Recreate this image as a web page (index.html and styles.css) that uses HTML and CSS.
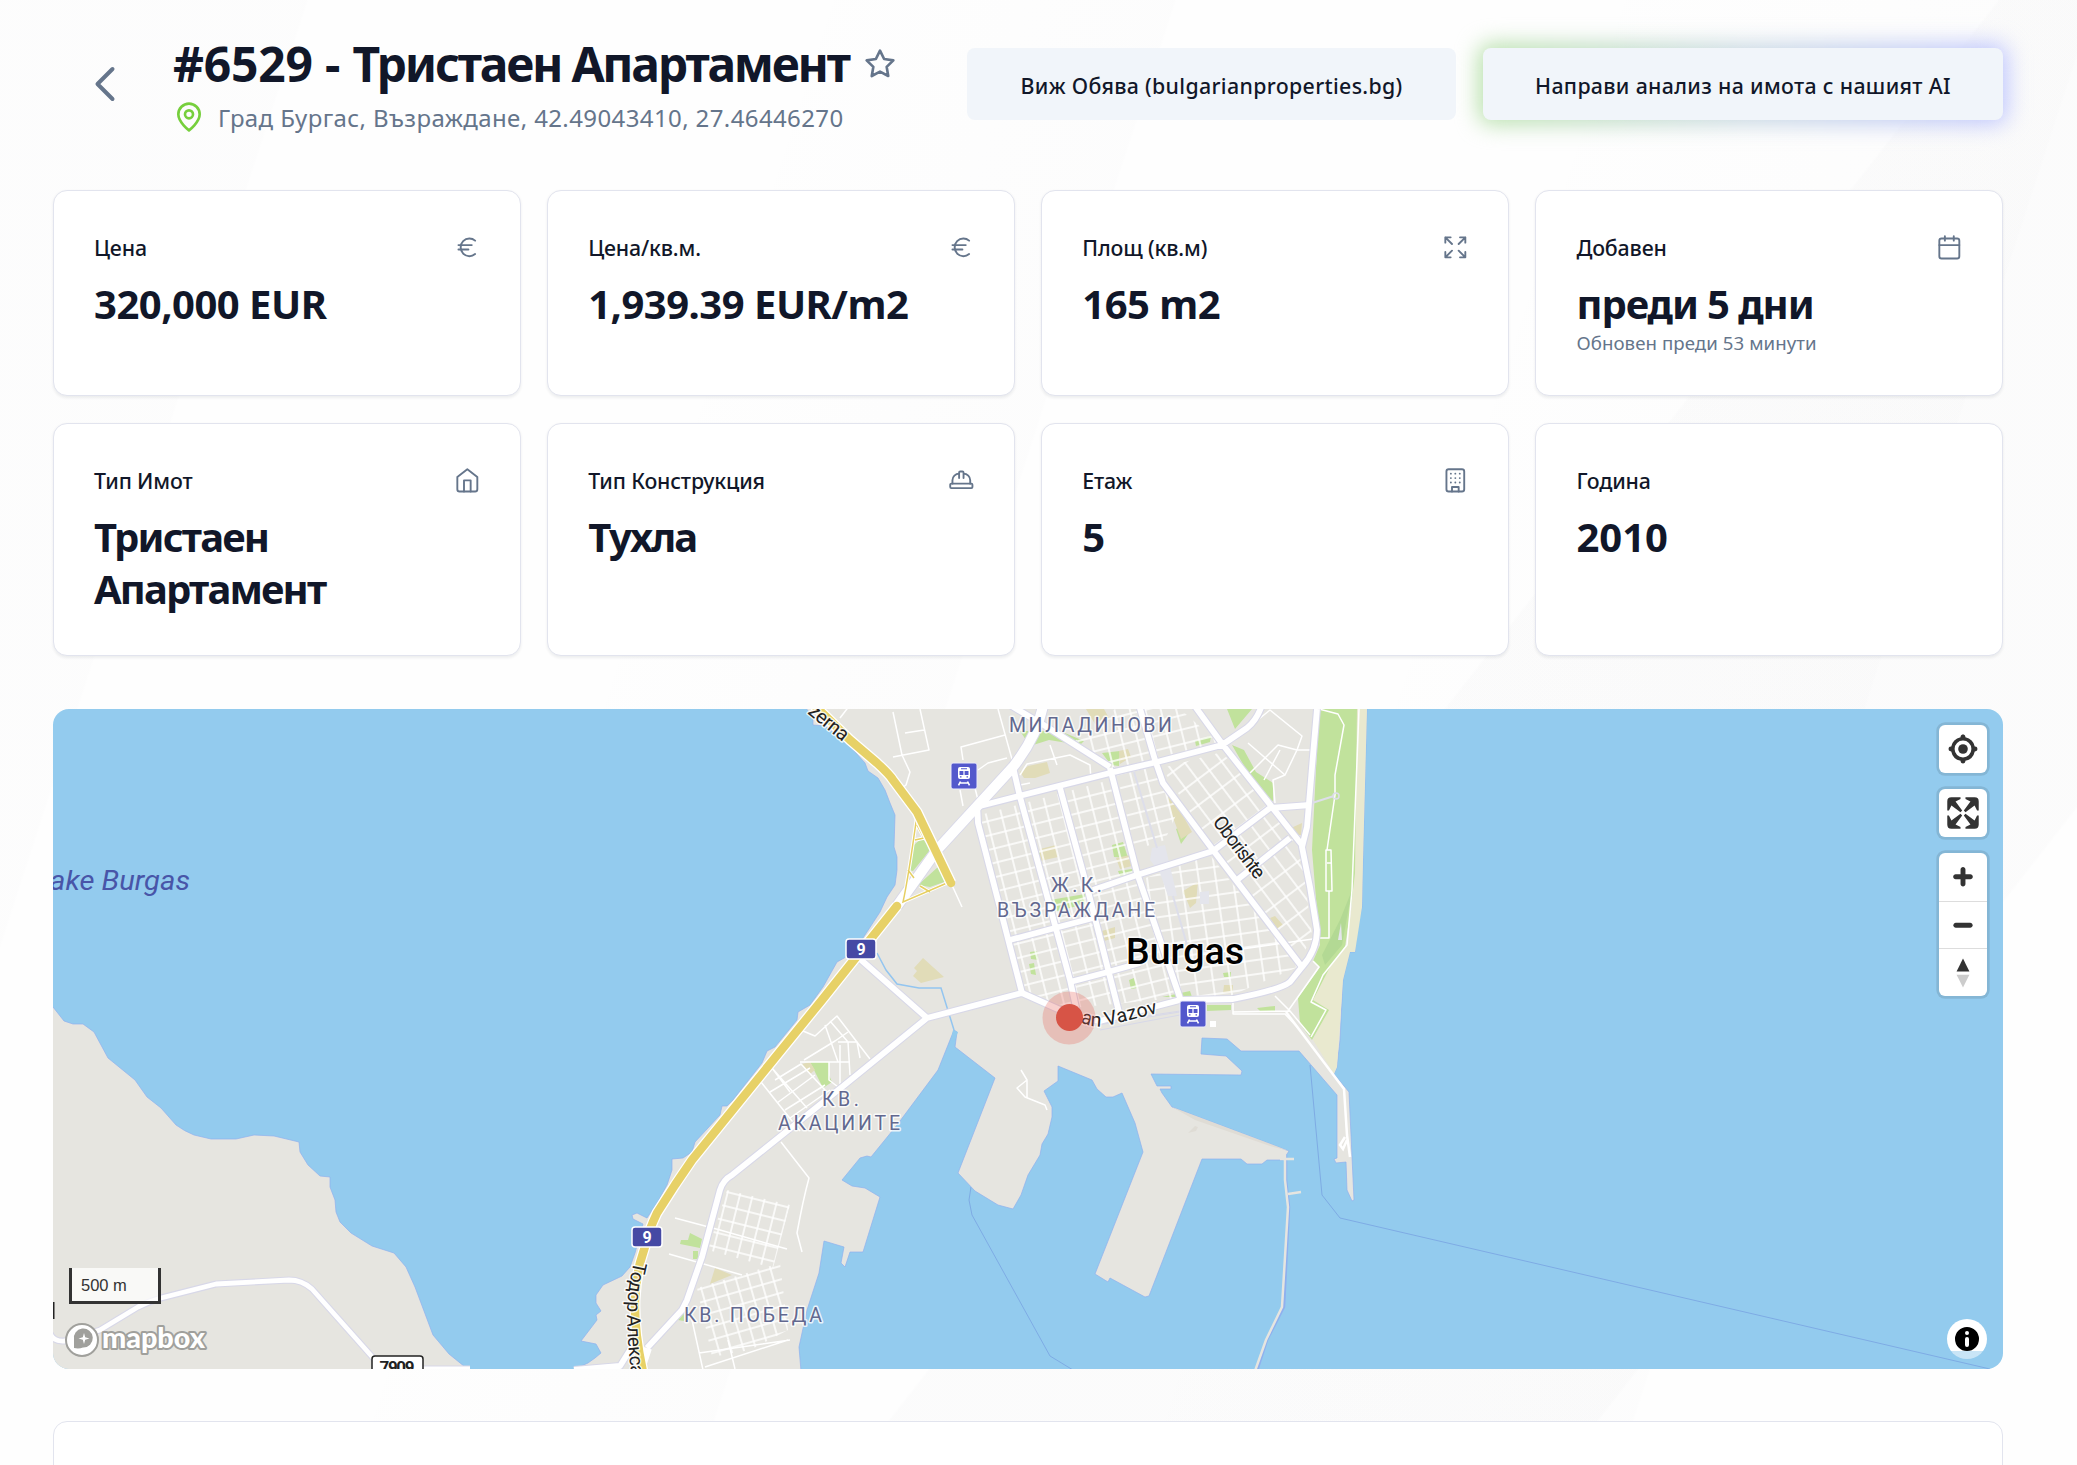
FILE: index.html
```html
<!DOCTYPE html>
<html lang="bg">
<head>
<meta charset="utf-8">
<title>#6529 - Тристаен Апартамент</title>
<link rel="stylesheet" href="styles.css">
</head>
<body>
<main class="page">
  <header class="header">
    <svg class="back" viewBox="0 0 24 24"><path d="m15 18-6-6 6-6"/></svg>
    <div class="heading">
      <div class="title-row">
        <h1 class="title"><span class="title-id">#6529 - </span>Тристаен Апартамент</h1>
        <svg class="star" viewBox="0 0 24 24"><path d="M12 2l3.09 6.26L22 9.27l-5 4.87 1.18 6.88L12 17.77l-6.18 3.25L7 14.14 2 9.27l6.91-1.01z"/></svg>
      </div>
      <div class="address">
        <svg class="pin" viewBox="0 0 24 24"><path d="M20 10c0 6-8 12-8 12s-8-6-8-12a8 8 0 0 1 16 0z"/><circle cx="12" cy="10" r="3"/></svg>
        <span class="address-text">Град Бургас, Възраждане, 42.49043410, 27.46446270</span>
      </div>
    </div>
    <div class="actions">
      <a class="btn btn-view"><span>Виж Обява (bulgarianproperties.bg)</span></a>
      <a class="btn btn-ai"><span>Направи анализ на имота с нашият AI</span></a>
    </div>
  </header>

  <section class="cards">
    <article class="card">
      <div class="card-head"><span>Цена</span><svg class="icon" viewBox="0 0 24 24"><path d="M4 10h12M4 14h9M19 6a7.7 7.7 0 0 0-5.2-2A7.9 7.9 0 0 0 6 12c0 4.4 3.5 8 7.8 8 2 0 3.8-.8 5.2-2"/></svg></div>
      <div class="value">320,000 EUR</div>
    </article>
    <article class="card">
      <div class="card-head"><span>Цена/кв.м.</span><svg class="icon" viewBox="0 0 24 24"><path d="M4 10h12M4 14h9M19 6a7.7 7.7 0 0 0-5.2-2A7.9 7.9 0 0 0 6 12c0 4.4 3.5 8 7.8 8 2 0 3.8-.8 5.2-2"/></svg></div>
      <div class="value">1,939.39 EUR/m2</div>
    </article>
    <article class="card">
      <div class="card-head"><span>Площ (кв.м)</span><svg class="icon" viewBox="0 0 24 24"><path d="m21 21-6-6m6 6v-4.8m0 4.8h-4.8M3 16.2V21m0 0h4.8M3 21l6-6M21 7.8V3m0 0h-4.8M21 3l-6 6M3 7.8V3m0 0h4.8M3 3l6 6"/></svg></div>
      <div class="value">165 m2</div>
    </article>
    <article class="card">
      <div class="card-head"><span>Добавен</span><svg class="icon" viewBox="0 0 24 24"><rect x="3" y="4" width="18" height="18" rx="2"/><path d="M16 2v4M8 2v4M3 10h18"/></svg></div>
      <div class="value value-phrase">преди 5 дни</div>
      <div class="note">Обновен преди 53 минути</div>
    </article>
    <article class="card">
      <div class="card-head"><span>Тип Имот</span><svg class="icon" viewBox="0 0 24 24"><path d="m3 9 9-7 9 7v11a2 2 0 0 1-2 2H5a2 2 0 0 1-2-2z"/><path d="M9 22V12h6v10"/></svg></div>
      <div class="value value-word">Тристаен Апартамент</div>
    </article>
    <article class="card">
      <div class="card-head"><span>Тип Конструкция</span><svg class="icon" viewBox="0 0 24 24"><path d="M2 18a1 1 0 0 0 1 1h18a1 1 0 0 0 1-1v-2a1 1 0 0 0-1-1H3a1 1 0 0 0-1 1z"/><path d="M10 10V5a1 1 0 0 1 1-1h2a1 1 0 0 1 1 1v5M4 15v-3a6 6 0 0 1 6-6M14 6a6 6 0 0 1 6 6v3"/></svg></div>
      <div class="value value-word">Тухла</div>
    </article>
    <article class="card">
      <div class="card-head"><span>Етаж</span><svg class="icon" viewBox="0 0 24 24"><rect x="4" y="2" width="16" height="20" rx="2"/><path d="M9 22v-4h6v4M8 6h.01M16 6h.01M12 6h.01M12 10h.01M12 14h.01M16 10h.01M16 14h.01M8 10h.01M8 14h.01"/></svg></div>
      <div class="value">5</div>
    </article>
    <article class="card">
      <div class="card-head"><span>Година</span></div>
      <div class="value value-year">2010</div>
    </article>
  </section>

  <section class="map">
    <svg class="map-canvas" viewBox="53 709 1950 660">
      <defs>
        <pattern id="blocks" width="15" height="14" patternUnits="userSpaceOnUse" patternTransform="translate(983 807) rotate(-14)"><path d="M0 1H15M1 0V14" class="street"/></pattern>
        <pattern id="blocksEast" width="21" height="15" patternUnits="userSpaceOnUse" patternTransform="translate(1237 880) rotate(53)"><path d="M0 1H21M1 0V15" class="street"/></pattern>
        <pattern id="blocksCenter" width="17" height="14" patternUnits="userSpaceOnUse" patternTransform="translate(1180 998) rotate(-8)"><path d="M0 1H17M1 0V14" class="street"/></pattern>
        <pattern id="blocksSouth" width="12.5" height="14" patternUnits="userSpaceOnUse" patternTransform="translate(727 1191) rotate(14)"><path d="M0 1H12.5M1 0V14" class="street"/></pattern>
        <pattern id="blocksPobeda" width="12" height="13" patternUnits="userSpaceOnUse" patternTransform="translate(700 1288) rotate(-16)"><path d="M0 1H12M1 0V13" class="street"/></pattern>
        <g id="roads">
          <path d="M860 959 927 1018M647 1348 682 1310 687 1300 702 1257 720 1190Q723 1180 732 1175L842 1087 927 1018 1022 993 1078 1018 1100 1021 1180 1000 1233 999Q1280 990 1290 982L1302 967Q1317 950 1317 930L1310 887 1302 847 1307 827 1312 767 1317 709"/>
          <path d="M980 806 1110 773 1157 762 1222 745 1247 728Q1257 720 1262 705M977 803 978 823 1022 993M1013 767 1020 797 1070 980 1077 1012M1060 788 1087 887 1120 1016M1110 768 1137 873 1180 998M1010 705 1047 727 1110 767M1139 705 1155 760 1163 783 1213 850 1302 967M1194 705 1223 745 1302 845M1093 890 1137 875 1213 851 1270 808 1310 805M1237 880 1290 838M1010 940 1055 928 1093 918M1070 982 1108 972 1140 963"/>
          <path d="M574 1370 620 1366 630 1350 636 1340"/>
        </g>
        <path id="rural" d="M50 1333Q53 1342 65 1341L100 1330 138 1307Q150 1301 161 1298L216 1284 289 1280Q302 1280 312 1289L375 1360 395 1370M420 1369 470 1369"/>
        <path id="trunk" d="M812 703 850 740 877 763Q890 775 893 780L917 812 951 883M897 906 822 1000 692 1160 675 1185 657 1213Q649 1230 647 1240L640 1263Q636 1280 635 1300Q634 1330 643 1372"/>
        <path id="todorLine" d="M634 1261 Q627 1290 627 1315 T633 1390"/>
        <path id="vazovLine" d="M1080 1022Q1094 1029 1110 1025L1162 1012"/>
        <g id="station"><rect x="-13" y="-13" width="26" height="26" rx="2" class="station-box"/><path fill="#fff" fill-rule="evenodd" d="M-4-9H4Q6-9 6-7V1Q6 3 4 3H-4Q-6 3-6 1V-7Q-6-9-4-9zM-3-7.800V-6.800H3V-7.800zM-4.500-5V-1H-.6V-5zM.6-5V-1H4.500V-5zM-4 .3V1.600H-2.500V.3zM2.500 .3V1.600H4V.3z"/><path d="M-5.500 9.300-3.500 5.500M3.500 5.500 5.500 9.300M-4.500 7H4.500" class="rail"/></g>
      </defs>

      <rect x="53" y="709" width="1950" height="660" fill="#93cbee"/>
      <g class="waterway">
        <path d="M971 1187 969 1200 972 1215 1050 1356 1073 1370M1310 1065 1322 1195 1340 1218 1990 1369"/>
      </g>
      <path class="land" d="M53 1007 64 1021 73 1024 83 1024 94 1032 108 1058 135 1080 147 1097 161 1108 176 1125Q184 1131 194 1135L211 1139H236L254 1135 274 1136 299 1142 300 1152 308 1165 320 1176 330 1177V1187L335 1200 336 1212 340 1222 351 1233 372 1246 394 1253 406 1267 415 1287 433 1335 449 1354 470 1371H51V1005z"/>
      <path class="land" d="M805 707 813 717V725L825 726 847 743 865 763 868 771 878 778 885 790 890 803 895 815 894 847 897 857V870L895 885 887 897 880 912 863 938 846 957 837 962 823 987 810 1005 798 1012 797 1020 775 1047 767 1051 762 1063 733 1100 727 1106H722L720 1115 695 1142 692 1152 683 1158 672 1159V1170L667 1185 657 1203 647 1218 637 1213 632 1215 633 1219 643 1224 635 1253 630 1267 622 1276 603 1285 596 1295V1303L601 1311 596 1315 597 1320 581 1341 596 1344 601 1353 595 1358 588 1363 570 1371H801L799 1347 807 1310 819 1273 824 1241 844 1247 841 1263 845 1267 850 1252H863L880 1197 865 1188 852 1186 842 1180 860 1158 867 1156 871 1157 897 1125 938 1070 954 1030 957 1032 955 1047 995 1078 958 1173 975 1191 998 1205 1013 1209 1021 1195 1028 1175 1040 1155 1042 1144 1048 1134 1052 1117V1107L1044 1091 1058 1081V1066L1092 1080 1097 1089 1106 1097H1113L1122 1093 1135 1123 1143 1152 1095 1274 1108 1282 1110 1278 1145 1297 1149 1296 1202 1159H1241L1247 1164H1262L1267 1160H1283L1289 1151 1172 1107 1162 1093 1160 1089H1171V1086H1157L1151 1074 1241 1075 1242 1071 1226 1056 1201 1054 1202 1038 1227 1039 1241 1051H1299L1337 1095V1158L1334 1159 1336 1163 1346 1162 1347 1190 1352 1201 1354 1200 1349 1092 1334 1074 1337 1067 1340 1040 1343 980 1346 967 1350 952H1355L1357 927 1362 907 1363 860 1367 707z"/>
      <g fill="none"><path d="M1286 1155V1180L1289 1207 1284 1307 1267 1340 1257 1371" stroke="#8fb0ee" stroke-width="2.500"/><path d="M1285 1155V1180L1288 1207 1282 1307 1266 1340 1255 1371M1288 1194 1301 1192M1280 1159H1294" stroke="#e6e5e0" stroke-width="2.500"/></g>
      <path fill="#dfdcd5" d="M1172 1107 1289 1151 1270 1146 1195 1120zM1188 1133 1195 1126 1198 1127 1196 1131z"/>
      <path fill="#e9e9cf" d="M1357 709H1367L1363 860 1362 907 1355 952H1350L1343 980 1337 1067 1334 1074 1313 1040 1327 1010 1311 1002 1323 975 1346 947 1352 905z"/>
      <path class="park" d="M1319 709H1357L1355 873 1351 907 1345 947 1330 967 1313 1000 1329 1010 1312 1040 1300 1024 1298 998 1320 967 1313 961 1320 945 1318 923 1312 850z"/>
      <path fill="#b3d994" d="M1352 890 1342 945 1325 965 1322 955 1340 920z"/>
      <g class="park">
        <path d="M1227 709H1252L1235 729zM1232 745 1244 750 1256 772 1273 783V801L1262 797zM1112 845 1123 842 1128 858 1114 857zM1118 871 1132 869 1134 872 1120 876zM1102 753 1120 751 1119 766 1111 765zM1176 829 1185 825 1189 833 1181 844zM922 838 931 849 913 871 909 870 914 845zM938 867 947 881 930 887 918 885zM908 880 915 880 910 890zM1050 900 1085 894V904L1054 912zM1020 731 1060 731 1084 741 1080 745 1049 740 1030 746zM1195 741 1211 736 1210 742 1196 746zM1162 997 1190 991 1192 997zM1207 1005H1231V1010L1207 1011zM1223 973 1231 972V977H1224zM1129 980 1134 978 1137 988 1131 989zM1030 952 1037 951 1038 960 1031 959zM1029 964 1034 963 1036 975 1031 974zM1183 893 1195 886 1196 890 1186 896zM1257 1008 1275 1006V1011H1260zM1040 850 1044 860 1038 858z"/>
        <path d="M810 1062H829V1075L832 1082 823 1088zM690 1233 702 1239 700 1248 680 1244 681 1240 688 1240zM693 1251H698V1259H693zM684 1313V1321L678 1320z"/>
      </g>
      <g fill="#e1dcb8">
        <path d="M923 958 944 977 921 983 913 976 917 971 914 968zM1020 772 1028 766 1047 762 1050 773 1035 778 1024 778zM1040 849 1056 845 1058 857 1040 861zM1119 751 1128 749 1131 757 1120 764zM1116 858 1130 855 1132 866 1120 869zM1167 793 1180 810 1192 832 1181 839 1172 815zM1183 891 1198 882 1196 903 1190 908zM1291 828 1302 823 1301 835 1295 835zM1102 931 1115 927V938L1104 941zM1224 985H1233V993H1223zM1270 918 1275 916 1283 925 1277 929zM1086 709H1104L1110 720 1095 724zM802 1064 810 1062 815 1070 810 1074zM715 1268 732 1275 710 1284z"/>
      </g>
      <path fill="none" stroke="#93c5f0" stroke-width="1.500" d="M877 953 886 970 897 984 919 988H941L954 1030"/>
      <path fill="#93cbee" d="M953 1030 958 1032 954 1042 951 1040z"/>

      <path fill="url(#blocks)" d="M980 815 1110 780 1137 873 1177 998 1072 1008 1022 993z"/>
      <path fill="url(#blocks)" d="M1070 745 1115 709H1180L1220 744 1112 769z"/>
      <path fill="url(#blocks)" d="M1117 775 1155 766 1180 806 1165 840 1135 850z"/>
      <path fill="url(#blocksEast)" d="M1162 768 1222 752 1268 807 1213 848z M1216 853 1270 812 1300 846 1312 935 1300 962z"/>
      <path fill="url(#blocksCenter)" d="M1140 880 1210 855 1298 967 1230 996 1182 996z"/>
      <path fill="url(#blocksSouth)" d="M727 1190 790 1205 773 1268 708 1250z"/>
      <path fill="url(#blocksPobeda)" d="M697 1288 780 1263 788 1330 750 1350 712 1357z"/>
      <g class="street">
        <path d="M803 1031 815 1036 837 1016 870 1059M804 1060 835 1041 848 1032M825 1025 838 1062M830 1021 848 1042 850 1075M857 1042 860 1058M838 1042H857M800 1062H850M829 1062V1080L842 1090M840 1045V1085M772 1068 807 1108M761 1082 800 1131M772 1068 790 1092M775 1080 801 1064 825 1090M770 1092 810 1068M777 1103 815 1075M785 1110 825 1085M790 1118 830 1090M781 1142 809 1178Q803 1200 797 1233L802 1252M675 1218 720 1230 787 1249M669 1254 742 1275M692 1320 703 1370M699 1353 790 1340M705 1367 788 1340M728 1340 735 1369"/>
        <path d="M893 712 902 755M920 709 929 750 893 757M905 733 924 730M902 755 910 772 906 785 902 788M963 760 961 747 1005 735M978 770 988 763 1007 758M840 718 850 705M998 709 1015 770M960 790 963 806M975 788 978 800M951 883 962 907M1020 775 1027 764 1070 755 1090 765 1091 780M1050 745 1057 765M1020 785 1030 783M1233 740 1270 710 1302 736 1297 750 1278 745 1250 773M1248 743 1285 775 1297 750H1312M1264 780 1280 750M1285 775 1273 780 1275 803M1319 709 1338 714 1344 725 1335 775V795L1327 850M1326 850H1331L1332 891H1326zM1327 863H1331M1329 891V938H1315M1359 709 1352 890 1347 945 1323 975 1311 1002 1326 1010 1311 1037M1233 996V1014H1285L1298 1028M1233 1012 1290 1011M1313 961 1319 967 1288 1011M1200 955 1320 938M1275 996 1290 1011 1310 1035"/>
        <path d="M1021 1070 1027 1080 1017 1088 1025 1097 1045 1105 1047 1110M1027 1080V1098"/>
      </g>
      <path fill="none" stroke="#fff" stroke-width="2.500" d="M1286 1012 1344 1089 1347 1135 1350 1157M1345 1137 1340 1145 1343 1149 1347 1140"/>
      <g fill="#e4e5ec"><path d="M1152 848 1165 845 1168 858 1171 870 1177 896H1168L1160 873 1150 860zM1200 892 1209 891V904H1200z"/><path fill="none" stroke="#dddeea" stroke-width="2" d="M1134 772 1157 848M1173 896 1187 945M1312 803 1334 796"/><circle cx="1336" cy="796" r="3" fill="none" stroke="#dddeea" stroke-width="1.500"/><path d="M1341 923 1338 940H1342z"/></g>
      <path fill="none" stroke="#d7d8e8" d="M1085 1027 1180 1012M1100 1030 1180 1015M1120 1020 1200 1008"/>
      <rect x="1210" y="1021" width="6" height="6" fill="#fff"/>

      <use href="#rural" class="casing rural-casing"/><use href="#rural" class="fill-road rural-fill"/>
      <use href="#roads" class="casing"/><path class="casing wide" d="M897 906 937 850 1013 767Q1038 735 1043 705"/>
      <use href="#roads" class="fill-road"/>
      <path class="fill-road wide-fill" d="M897 906 937 850 1013 767Q1038 735 1043 705M647 1348 642 1363"/>
      <g fill="none"><path d="M917 815Q908 880 903 902L947 883M917 825 924 838 915 840M908 870 914 878M920 886 930 892" stroke="#fff" stroke-width="3.500"/><path d="M917 815Q908 880 903 902L947 883M917 825 924 838 915 840M908 870 914 878M920 886 930 892" stroke="#e6cf62" stroke-width="1.500"/></g>
      <use href="#trunk" class="trunk-casing"/><use href="#trunk" class="trunk"/>

      <use href="#station" x="964" y="776"/><use href="#station" x="1193" y="1014"/>
      <g class="shield"><rect x="846" y="939" width="30" height="20" rx="3"/><text x="861" y="955">9</text><rect x="632" y="1227" width="30" height="20" rx="3"/><text x="647" y="1243">9</text></g>
      <g class="shield-white"><rect x="372" y="1356" width="51" height="26" rx="3"/><text x="397" y="1373" textLength="35">7909</text></g>
      <path d="M53.500 1302V1319" stroke="#222" stroke-width="2"/>

      <g class="area">
        <text x="1009" y="732" textLength="163">МИЛАДИНОВИ</text>
        <text x="1051" y="892" textLength="51">Ж.К.</text>
        <text x="997" y="917" textLength="158">ВЪЗРАЖДАНЕ</text>
        <text x="822" y="1106" textLength="37">КВ.</text>
        <text x="778" y="1130" textLength="122">АКАЦИИТЕ</text>
        <text x="684" y="1322" textLength="138">КВ. ПОБЕДА</text>
      </g>
      <text class="water-name" x="50" y="890" textLength="140" lengthAdjust="spacingAndGlyphs">ake Burgas</text>
      <g class="road-name">
        <text transform="translate(1212 822) rotate(53)" textLength="73">Oborishte</text>
        <text transform="translate(807 713) rotate(39)" textLength="46">zerna</text>
        <text class="vazov"><textPath href="#vazovLine">an Vazov</textPath></text>
        <text class="todor"><textPath href="#todorLine">Тодор Алекса</textPath></text>
      </g>
      <text class="city" x="1126" y="964" textLength="118" lengthAdjust="spacingAndGlyphs">Burgas</text>
      <circle cx="1069" cy="1018" r="26.500" fill="#e8685c" fill-opacity=".3"/><circle cx="1069.500" cy="1017.500" r="13.500" fill="#d75446"/>

      <g class="brand"><circle cx="82" cy="1340" r="16"/><path fill="#a0a09c" d="M74 1348V1340A9.500 9.500 0 1 1 83 1347.500Q79 1349 74 1348zM84 1333 82.800 1337.300 78.500 1338.500 82.800 1339.700 84 1344 85.200 1339.700 89.500 1338.500 85.200 1337.300z" fill-rule="evenodd"/><text x="102" y="1348" textLength="103" lengthAdjust="spacingAndGlyphs">mapbox</text></g>
    </svg>

    <div class="map-controls">
      <div class="control-group"><svg viewBox="0 0 29 29"><g transform="translate(4.500 4.500)"><path d="M10 4C9 4 9 5 9 5v.1A5 5 0 0 0 5.100 9H5s-1 0-1 1 1 1 1 1h.1A5 5 0 0 0 9 14.900v.1s0 1 1 1 1-1 1-1v-.1a5 5 0 0 0 3.900-3.900h.1s1 0 1-1-1-1-1-1h-.1A5 5 0 0 0 11 5.100V5s0-1-1-1zm0 2.500a3.500 3.500 0 1 1 0 7 3.500 3.500 0 1 1 0-7z" transform="translate(-4.500 -4.500) scale(1.450)"/><circle cx="10" cy="10" r="2.900"/></g></svg></div>
      <div class="control-group"><svg viewBox="0 0 29 29"><path d="M24 16v5.500c0 1.750-.75 2.500-2.500 2.500H16v-1l3-1.500-4-5.500 1-1 5.500 4 1.500-3h1zM6 16l1.500 3 5.500-4 1 1-4 5.500 3 1.500v1H7.500C5.750 24 5 23.250 5 21.500V16h1zm7-11v1l-3 1.500 4 5.500-1 1-5.500-4L6 13H5V7.500C5 5.750 5.750 5 7.500 5H13zm11 2.500c0-1.750-.75-2.500-2.500-2.500H16v1l3 1.500-4 5.500 1 1 5.500-4 1.500 3h1V7.500z"/></svg></div>
      <div class="control-group">
        <svg viewBox="0 0 29 29"><path d="M14.500 8.500c-.75 0-1.500.75-1.500 1.500v3h-3c-.75 0-1.500.75-1.500 1.500S9.250 16 10 16h3v3c0 .75.75 1.500 1.500 1.500S16 19.750 16 19v-3h3c.75 0 1.500-.75 1.500-1.500S19.750 13 19 13h-3v-3c0-.75-.75-1.500-1.500-1.500z"/></svg>
        <svg viewBox="0 0 29 29"><path d="M10 13c-.75 0-1.500.75-1.500 1.500S9.250 16 10 16h9c.75 0 1.500-.75 1.500-1.500S19.750 13 19 13h-9z"/></svg>
        <svg viewBox="0 0 29 29"><path d="m10.500 14 4-8 4 8h-8z"/><path fill="#ccc" d="m10.500 16 4 8 4-8h-8z"/></svg>
      </div>
    </div>
    <div class="scale">500 m</div>
    <div class="info"><svg viewBox="0 0 20 20"><path fill-rule="evenodd" d="M4 10a6 6 0 1 0 12 0 6 6 0 1 0-12 0m5-3a1 1 0 1 0 2 0 1 1 0 1 0-2 0m0 3a1 1 0 1 1 2 0v3a1 1 0 1 1-2 0"/></svg></div>
  </section>

  <section class="panel"></section>
</main>
</body>
</html>
```
FILE: styles.css
```css
* { box-sizing: border-box; }
html { overflow: hidden; }
body {
  margin: 0;
  height: 1465px;
  overflow: hidden;
  font-family: "Noto Sans", "Open Sans", sans-serif;
  color: #111729;
  background:
    linear-gradient(108deg, rgba(120,120,130,.012) 0 12%, transparent 12.1% 30%, rgba(120,120,130,.012) 46%, transparent 46.1% 60%, rgba(120,120,130,.01) 82%, transparent 82.1%),
    linear-gradient(128deg, transparent 0 62%, rgba(120,120,130,.018) 62.1% 84%, transparent 84.1%),
    #fefefe;
}
.page { padding: 34px 74px 0 53px; display: flex; flex-direction: column; }

.header { display: flex; height: 156px; align-items: flex-start; }
.back { width: 60px; height: 60px; margin: 20px 38px 0 22px; fill: none; stroke: #65758b; stroke-width: 1.6; stroke-linecap: round; stroke-linejoin: round; }
.heading { display: flex; flex-direction: column; width: 794px; }
.title-row { display: flex; align-items: center; height: 60px; gap: 15px; }
.title { margin: -1px 0 0; font-size: 48px; line-height: 60px; font-weight: 700; letter-spacing: -2.25px; white-space: nowrap; }
.title-id { letter-spacing: -.2px; }
.star { width: 32px; height: 32px; fill: none; stroke: #65758b; stroke-width: 2; stroke-linejoin: round; }
.address { display: flex; align-items: center; height: 48px; gap: 13px; }
.pin { width: 32px; height: 32px; margin-top: -2px; fill: none; stroke: #76cf3c; stroke-width: 2; stroke-linejoin: round; }
.address-text { font-size: 24px; line-height: 36px; letter-spacing: .39px; color: #65758b; white-space: nowrap; }
.actions { display: flex; gap: 27px; margin-top: 14px; }
.btn { display: flex; align-items: center; justify-content: center; height: 72px; border-radius: 8px; background: #f1f5fa; font-size: 21.333px; font-weight: 500; letter-spacing: .33px; white-space: nowrap; padding-top: 3px; }
.btn-view { width: 489px; }
.btn-ai { position: relative; width: 520px; }
.btn-ai::before { content: ""; position: absolute; inset: -4px -4px; z-index: -1; border-radius: 12px; background: linear-gradient(90deg, #b5e0a6, #c5d6e0 50%, #bdc4ff); filter: blur(11px); }

.cards { display: grid; grid-template-columns: repeat(4, 1fr); grid-template-rows: 206px 233px; gap: 27px 26.67px; }
.card { border: 1.333px solid #e2e4ee; border-radius: 14px; background: #fff; padding: 38px 39px 38px 40px; box-shadow: 0 1.5px 3px rgba(15, 23, 42, .07); }
.card-head { display: flex; align-items: center; justify-content: space-between; height: 36px; font-size: 21.333px; font-weight: 500; letter-spacing: -.15px; }
.icon { width: 26.667px; height: 26.667px; fill: none; stroke: #65758b; stroke-width: 1.7; stroke-linecap: round; stroke-linejoin: round; }
.value { margin-top: 13px; font-size: 40px; line-height: 52px; font-weight: 700; letter-spacing: -.5px; }
.value-phrase { letter-spacing: -1.1px; }
.value-word { letter-spacing: -1.85px; }
.value-year { letter-spacing: 0; }
.note { margin-top: 1px; font-size: 18.667px; line-height: 24px; letter-spacing: .06px; color: #65758b; }

.map { position: relative; margin-top: 53px; height: 660px; border-radius: 16px; overflow: hidden; }
.map-canvas { display: block; width: 1950px; height: 660px; font-family: Roboto, sans-serif; }
.land { fill: #e6e5e0; stroke: #8fb0ee; stroke-width: .7; }
.park { fill: #c1e29c; }
.waterway { fill: none; stroke: #7eabe4; stroke-width: 1; }
.street { fill: none; stroke: #fff; stroke-width: 1.5; stroke-linejoin: round; }
.casing { fill: none; stroke: #d8d8e8; stroke-width: 8; stroke-linejoin: round; }
.fill-road { fill: none; stroke: #fff; stroke-width: 5.8; stroke-linejoin: round; }
.wide { stroke-width: 12; }
.wide-fill { stroke-width: 10; }
.rural-casing { stroke-width: 7; }
.rural-fill { stroke-width: 4.8; }
.trunk-casing { fill: none; stroke: #fff; stroke-width: 11; stroke-linejoin: round; }
.trunk { fill: none; stroke: #e7d167; stroke-width: 8.5; stroke-linecap: round; stroke-linejoin: round; }
.station-box { fill: #5358cc; stroke: #ecebfa; stroke-width: 1; }
.rail { fill: none; stroke: #fff; stroke-width: 1.6; }
.shield rect { fill: #4549a4; stroke: #fff; stroke-width: 1.5; }
.shield text { fill: #fff; font-size: 16px; font-weight: 700; text-anchor: middle; }
.shield-white rect { fill: #fff; stroke: #222; stroke-width: 1.5; }
.shield-white text { fill: #222; font-size: 17px; font-weight: 700; text-anchor: middle; }
.area text, .road-name text, .city { paint-order: stroke; stroke: #fff; stroke-opacity: .8; stroke-width: 3px; stroke-linejoin: round; }
.area text { font-size: 19.5px; fill: #62688f; }
.road-name text { font-size: 19.5px; fill: #222; }
.road-name .vazov { letter-spacing: .2px; }
.road-name .todor { font-size: 19px; letter-spacing: -.6px; }
.water-name { font-size: 28px; font-style: italic; fill: #4855a8; }
.city { font-size: 37px; font-weight: 500; fill: #000; }
.brand circle { fill: #fff; stroke: #a0a09c; stroke-width: 2; }
.brand text { font-family: Lato, sans-serif; font-size: 29px; font-weight: 900; fill: #fff; stroke: #a0a09c; stroke-width: 4px; stroke-linejoin: round; paint-order: stroke; }

.map-controls { position: absolute; top: 16px; right: 16px; display: flex; flex-direction: column; gap: 16px; }
.control-group { width: 48px; border-radius: 6px; background: #fff; box-shadow: 0 0 0 2.667px rgba(0, 0, 0, .1); fill: #333; }
.control-group svg { display: block; width: 48px; height: 48px; }
.control-group + .control-group + .control-group svg { height: 47.5px; }
.control-group svg + svg { border-top: 1.333px solid #ddd; }
.scale { position: absolute; left: 16px; bottom: 65px; width: 92px; height: 36px; padding: 3px 9px; border: 3px solid #333; border-top: 0; background: rgba(255, 255, 255, .75); color: #333; font: 16.5px/28px "Liberation Sans", sans-serif; }
.info { position: absolute; right: 16px; bottom: 10px; width: 40px; height: 40px; border-radius: 20px; background: linear-gradient(#fff 0 32px, rgba(255, 255, 255, .5) 32px); }
.info svg { display: block; width: 40px; height: 40px; }

.panel { height: 80px; margin-top: 52px; border: 1.333px solid #e2e4ee; border-radius: 14px; background: #fff; }
```
